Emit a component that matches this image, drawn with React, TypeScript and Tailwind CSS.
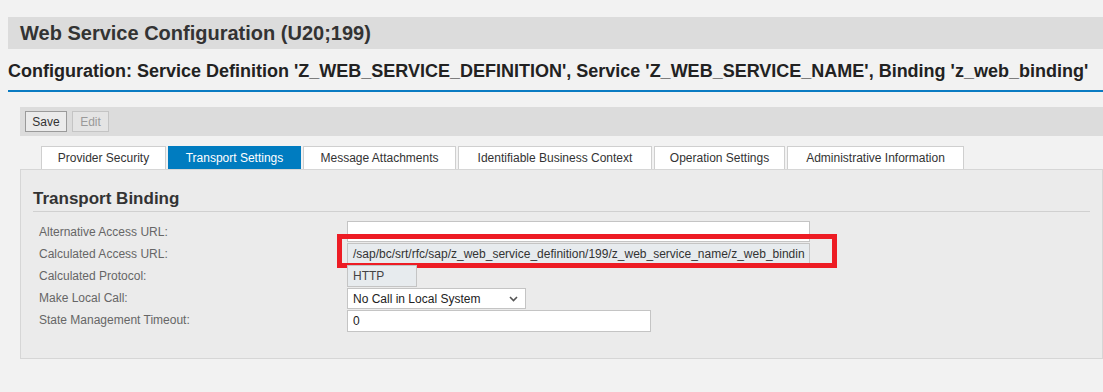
import React from 'react';

// SAP-style web service config screen
const tabs = [
  { label: 'Provider Security', w: 'w-[125px]' },
  { label: 'Transport Settings', w: 'w-[133px]', active: true },
  { label: 'Message Attachments', w: 'w-[153px]' },
  { label: 'Identifiable Business Context', w: 'w-[194px]' },
  { label: 'Operation Settings', w: 'w-[131px]' },
  { label: 'Administrative Information', w: 'w-[177px]' },
];

const Row = ({ label, children }: { label: string; children: React.ReactNode }) => (
  <div className="flex h-[22px]">
    <div className="w-[308px] ml-[6px] flex items-center text-[12px] text-[#666]">{label}</div>
    <div className="relative">{children}</div>
  </div>
);

const App = () => {
  return (
    <div className="w-[1103px] h-[392px] overflow-hidden bg-[#f2f2f2] pl-2 pt-[17px] font-['Liberation_Sans',Arial,sans-serif] text-[#333]">
      <div className="h-8 bg-[#dcdcdc] pl-3 flex items-center text-[20px] font-bold text-[#333]">
        Web Service Configuration (U20;199)
      </div>
      <div className="mt-3 pb-[9px] border-b-2 border-[#0a7bc2] text-[18px] leading-5 font-bold text-[#222] whitespace-nowrap">
        Configuration: Service Definition 'Z_WEB_SERVICE_DEFINITION', Service 'Z_WEB_SERVICE_NAME', Binding 'z_web_binding'
      </div>

      <div className="ml-3">
        <div className="mt-[15px] h-[29px] bg-[#dcdcdc] pl-[5px] flex items-center gap-[5px] text-[12px]">
          <button className="h-[21px] w-[42px] border border-[#9a9a9a] bg-[#ebebeb] text-[#333]">Save</button>
          <button className="h-[21px] w-[37px] border border-[#c4c4c4] bg-[#e4e4e4] text-[#9a9a9a]">Edit</button>
        </div>

        <div className="mt-[10px] ml-[21px] flex gap-[2px]">
          {tabs.map((t) => (
            <div
              key={t.label}
              className={`${t.w} h-[23px] flex items-center justify-center text-[12px] ${
                t.active ? 'bg-[#007cc0] text-white border border-[#007cc0]' : 'bg-white text-[#333] border border-b-0 border-[#cfcfcf]'
              }`}
            >
              {t.label}
            </div>
          ))}
        </div>

        <div className="h-[190px] bg-[#ebebeb] border border-[#d6d6d6] px-3">
          <div className="pt-[19px] pb-[2px] border-b border-[#d0d0d0] text-[17px] leading-5 font-bold text-[#333]">
            Transport Binding
          </div>
          <div className="mt-[9px]">
            <Row label="Alternative Access URL:">
              <div className="w-[463px] h-[21px] bg-white border border-[#c4c4c4]" />
            </Row>
            <Row label="Calculated Access URL:">
              <div className="w-[463px] h-[21px] bg-[#e7ebee] border border-[#c4c4c4] pl-[5px] flex items-center text-[12px] text-[#333] whitespace-nowrap overflow-hidden">
                /sap/bc/srt/rfc/sap/z_web_service_definition/199/z_web_service_name/z_web_bindin
              </div>
              <div className="absolute left-[-10px] top-[-9px] w-[500px] h-[34px] border-[5px] border-[#ed1c24]" />
            </Row>
            <Row label="Calculated Protocol:">
              <div className="w-[70px] h-[22px] bg-[#e7ebee] border border-[#c4c4c4] pl-[5px] flex items-center text-[12px] text-[#444]">
                HTTP
              </div>
            </Row>
            <Row label="Make Local Call:">
              <div className="w-[179px] h-[21px] mt-px bg-white border border-[#c4c4c4] pl-[5px] pr-[7px] flex items-center justify-between text-[12px] text-[#222]">
                <span>No Call in Local System</span>
                <svg width="9" height="6" viewBox="0 0 9 6" fill="none" stroke="#555" strokeWidth="1.6">
                  <path d="M1 1l3.5 3.5L8 1" />
                </svg>
              </div>
            </Row>
            <Row label="State Management Timeout:">
              <div className="w-[304px] h-[22px] mt-px bg-white border border-[#c4c4c4] pl-[5px] flex items-center text-[12px] text-[#222]">
                0
              </div>
            </Row>
          </div>
        </div>
      </div>
    </div>
  );
};

export default App;
